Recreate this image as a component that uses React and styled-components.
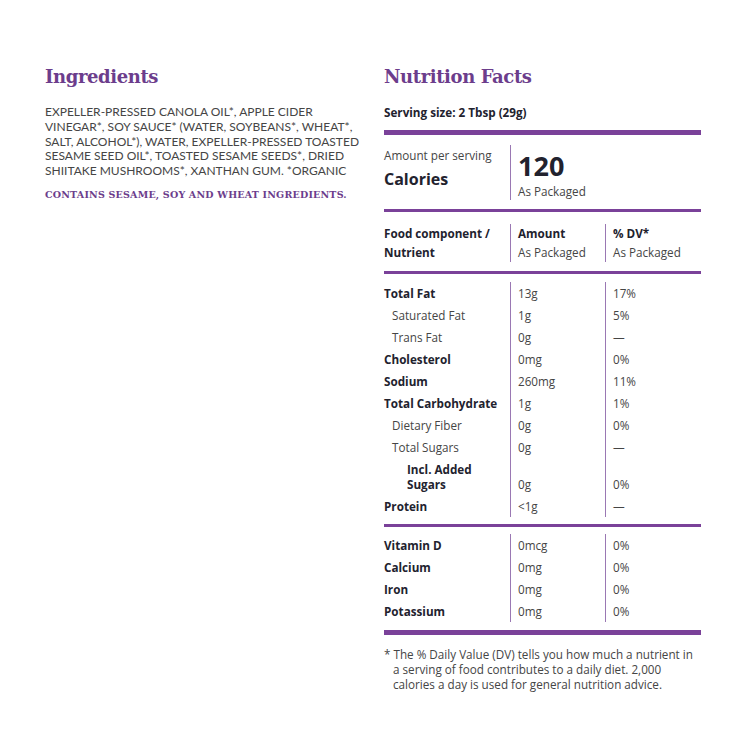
import React from 'react';
import styled, { createGlobalStyle } from 'styled-components';

const GlobalStyle = createGlobalStyle`
  body {
    margin: 0;
    background: #ffffff;
    font-family: "Open Sans", "Noto Sans", sans-serif;
  }
`;

const purple = '#6c3d8c';
const bar = '#7a4199';
const rule = '#9a78b3';
const ink = '#22222e';
const soft = '#454545';

const ingredientLines = [
  'EXPELLER-PRESSED CANOLA OIL*, APPLE CIDER',
  'VINEGAR*, SOY SAUCE* (WATER, SOYBEANS*, WHEAT*,',
  'SALT, ALCOHOL*), WATER, EXPELLER-PRESSED TOASTED',
  'SESAME SEED OIL*, TOASTED SESAME SEEDS*, DRIED',
  'SHIITAKE MUSHROOMS*, XANTHAN GUM. *ORGANIC',
];

const nutrients = [
  { name: 'Total Fat', amount: '13g', dv: '17%', bold: true },
  { name: 'Saturated Fat', amount: '1g', dv: '5%', indent: 1 },
  { name: 'Trans Fat', amount: '0g', dv: '—', indent: 1 },
  { name: 'Cholesterol', amount: '0mg', dv: '0%', bold: true },
  { name: 'Sodium', amount: '260mg', dv: '11%', bold: true },
  { name: 'Total Carbohydrate', amount: '1g', dv: '1%', bold: true },
  { name: 'Dietary Fiber', amount: '0g', dv: '0%', indent: 1 },
  { name: 'Total Sugars', amount: '0g', dv: '—', indent: 1 },
  { name: ['Incl. Added', 'Sugars'], amount: '0g', dv: '0%', bold: true, indent: 2, tall: true },
  { name: 'Protein', amount: '<1g', dv: '—', bold: true },
];

const minerals = [
  { name: 'Vitamin D', amount: '0mcg', dv: '0%' },
  { name: 'Calcium', amount: '0mg', dv: '0%' },
  { name: 'Iron', amount: '0mg', dv: '0%' },
  { name: 'Potassium', amount: '0mg', dv: '0%' },
];

const App = () => (
  <>
    <GlobalStyle />
    <Page>
      <Column>
        <Heading>Ingredients</Heading>
        <IngredientText>
          {ingredientLines.map((line) => (
            <Line key={line}>{line}</Line>
          ))}
        </IngredientText>
        <Allergens>CONTAINS SESAME, SOY AND WHEAT INGREDIENTS.</Allergens>
      </Column>

      <Column>
        <Heading>Nutrition Facts</Heading>
        <Serving>Serving size: 2 Tbsp (29g)</Serving>
        <Bar $thick $gap={10} />
        <CalorieSection>
          <CalorieLabel>
            <Small>Amount per serving</Small>
            <CaloriesWord>Calories</CaloriesWord>
          </CalorieLabel>
          <CalorieValue>
            <Big>120</Big>
            <Small>As Packaged</Small>
          </CalorieValue>
        </CalorieSection>
        <Bar />
        <HeadSection>
          <Cell>
            <HeadLine>Food component /</HeadLine>
            <HeadLine>Nutrient</HeadLine>
          </Cell>
          <Cell $ruled>
            <HeadLine>Amount</HeadLine>
            <SubLine>As Packaged</SubLine>
          </Cell>
          <Cell $ruled>
            <HeadLine>% DV*</HeadLine>
            <SubLine>As Packaged</SubLine>
          </Cell>
        </HeadSection>
        <Bar />
        <Rows $top={8} $bottom={7}>
          {nutrients.map((n) => (
            <Row key={n.amount + n.dv + n.name} $tall={n.tall}>
              <Name $bold={n.bold} $indent={n.indent} $tall={n.tall}>
                {Array.isArray(n.name) ? (
                  <span>
                    {n.name.map((part) => (
                      <Line key={part}>{part}</Line>
                    ))}
                  </span>
                ) : (
                  <span>{n.name}</span>
                )}
              </Name>
              <Value $tall={n.tall}>{n.amount}</Value>
              <Value $tall={n.tall}>{n.dv}</Value>
            </Row>
          ))}
        </Rows>
        <Bar />
        <Rows $top={7} $bottom={8}>
          {minerals.map((n) => (
            <Row key={n.name}>
              <Name $bold>
                <span>{n.name}</span>
              </Name>
              <Value>{n.amount}</Value>
              <Value>{n.dv}</Value>
            </Row>
          ))}
        </Rows>
        <Bar $thick />
        <Footnote>
          * The % Daily Value (DV) tells you how much a nutrient in a serving of food contributes
          to a daily diet. 2,000 calories a day is used for general nutrition advice.
        </Footnote>
      </Column>
    </Page>
  </>
);

export default App;

const Page = styled.div`
  display: grid;
  grid-template-columns: 320px 317px;
  column-gap: 19px;
  padding: 64px 0 0 45px;
`;

const Column = styled.div`
  display: flex;
  flex-direction: column;
`;

const Heading = styled.h2`
  margin: 0;
  font-family: "DejaVu Serif", "Liberation Serif", serif;
  font-weight: bold;
  font-size: 18px;
  line-height: 26px;
  color: ${purple};
  letter-spacing: -0.4px;
`;

const IngredientText = styled.div`
  margin-top: 15px;
  font-family: Lato, "Noto Sans", sans-serif;
  font-size: 12px;
  line-height: 14.8px;
  color: ${soft};
`;

const Line = styled.span`
  display: block;
  white-space: nowrap;
`;

const Allergens = styled.p`
  margin: 9px 0 0;
  font-family: "DejaVu Serif", "Liberation Serif", serif;
  font-weight: bold;
  font-size: 9.5px;
  line-height: 14px;
  color: ${purple};
  letter-spacing: 0.2px;
`;

const Serving = styled.div`
  margin-top: 14px;
  font-weight: bold;
  font-size: 11.7px;
  line-height: 16px;
  color: ${ink};
`;

const Bar = styled.div`
  height: ${(p) => (p.$thick ? 5 : 3)}px;
  background: ${bar};
  margin-top: ${(p) => p.$gap || 0}px;
`;

const CalorieSection = styled.div`
  display: grid;
  grid-template-columns: 126px 1fr;
  padding: 10px 0 9px;
`;

const CalorieLabel = styled.div`
  display: flex;
  flex-direction: column;
  padding-top: 2px;
`;

const CalorieValue = styled.div`
  display: flex;
  flex-direction: column;
  border-left: 1px solid ${rule};
  padding-left: 7px;
`;

const Small = styled.div`
  font-size: 11.7px;
  line-height: 17px;
  color: ${soft};
`;

const CaloriesWord = styled.div`
  margin-top: 3px;
  font-weight: bold;
  font-size: 16px;
  line-height: 24px;
  color: ${ink};
`;

const Big = styled.div`
  margin-top: 4px;
  font-weight: bold;
  font-size: 27px;
  line-height: 34px;
  color: ${ink};
`;

const HeadSection = styled.div`
  display: grid;
  grid-template-columns: 126px 95px 1fr;
  padding: 12px 0 9px;
`;

const Cell = styled.div`
  display: flex;
  flex-direction: column;
  ${(p) => p.$ruled && `border-left: 1px solid ${rule}; padding-left: 7px;`}
`;

const HeadLine = styled.div`
  font-weight: bold;
  font-size: 11.7px;
  line-height: 19px;
  color: ${ink};
`;

const SubLine = styled.div`
  font-size: 11.7px;
  line-height: 19px;
  color: ${soft};
`;

const Rows = styled.div`
  display: flex;
  flex-direction: column;
  padding: ${(p) => p.$top}px 0 ${(p) => p.$bottom}px;
`;

const Row = styled.div`
  display: grid;
  grid-template-columns: 126px 95px 1fr;
  height: ${(p) => (p.$tall ? 37 : 22)}px;
`;

const Name = styled.div`
  display: flex;
  align-items: center;
  padding-left: ${(p) => (p.$indent === 2 ? 23 : p.$indent ? 8 : 0)}px;
  font-size: 11.7px;
  font-weight: ${(p) => (p.$bold ? 'bold' : 'normal')};
  color: ${(p) => (p.$bold ? ink : soft)};
  line-height: ${(p) => (p.$tall ? '15px' : '22px')};
`;

const Value = styled.div`
  display: flex;
  align-items: ${(p) => (p.$tall ? 'flex-end' : 'center')};
  padding-bottom: ${(p) => (p.$tall ? 3 : 0)}px;
  border-left: 1px solid ${rule};
  padding-left: 7px;
  font-size: 11.7px;
  line-height: 16px;
  color: ${soft};
`;

const Footnote = styled.p`
  margin: 12px 0 0;
  padding-left: 9px;
  text-indent: -9px;
  font-size: 11.7px;
  line-height: 15px;
  color: ${soft};
`;
